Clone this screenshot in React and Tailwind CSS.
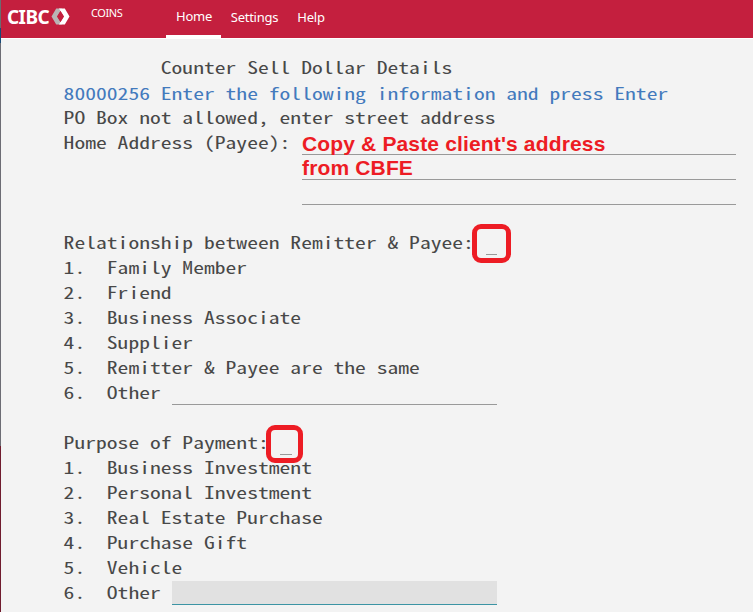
import React from "react";

const relationships = [
  "Family Member",
  "Friend",
  "Business Associate",
  "Supplier",
  "Remitter & Payee are the same",
];

const purposes = [
  "Business Investment",
  "Personal Investment",
  "Real Estate Purchase",
  "Purchase Gift",
  "Vehicle",
];

function Logo() {
  return (
    <div className="flex w-[77px] pl-[6px]">
      <span className="w-[44px] text-[19px] leading-[34px] font-bold tracking-[-0.6px] whitespace-nowrap">CIBC</span>
      <svg className="mt-2 h-[17px] w-[19px]" viewBox="0 0 19 17">
        <path d="M5.2 0.5H11L6.3 8.5L11 16.5H5.2L0.5 8.5Z" fill="#b9b4b5" />
        <path d="M8 0.5H13.8L18.5 8.5L13.8 16.5H8L12.7 8.5Z" fill="#fff" />
        <path d="M9.5 3L13 8.5L9.5 14L6 8.5Z" fill="#c41f3e" />
      </svg>
    </div>
  );
}

function Row({ children }) {
  return <div className="flex h-[25px]">{children}</div>;
}

function Label({ children }) {
  return (
    <span className="inline-block origin-center -translate-x-[0.4px] -translate-y-[0.7px] scale-y-[0.77] whitespace-pre">
      {children}
    </span>
  );
}

function Options({ items }) {
  return items.map((item, i) => (
    <Row key={item}>
      <Label>{`${i + 1}.  ${item}`}</Label>
    </Row>
  ));
}

export default function App() {
  return (
    <div className="flex h-[612px] w-[753px] overflow-hidden bg-[#f3f3f3]">
      <div className="flex w-px shrink-0 flex-col">
        <div className="h-[28px] bg-[#6b6b70]" />
        <div className="h-[15px] bg-[#174a78]" />
        <div className="h-[403px] bg-[#6c6c74]" />
        <div className="h-[166px] bg-[#701c2e]" />
      </div>
      <div className="flex-1">
        <header className="flex h-[39px] border-b border-white bg-[#c41f3e] font-['Noto_Sans',sans-serif] text-[13px] text-white">
          <Logo />
          <div className="ml-[13px] w-[75px] text-[11px] leading-[26px] tracking-[-0.4px]">COINS</div>
          <nav className="flex tracking-[-0.25px]">
            <a className="w-[55px] border-b-[3px] border-white pl-px text-center leading-[33px]">Home</a>
            <a className="w-[67px] text-center leading-[35px]">Settings</a>
            <a className="w-[46px] text-center leading-[35px]">Help</a>
          </nav>
        </header>
        <main className="pt-[16px] pl-[63px] font-['Noto_Sans_Mono_CJK_SC','DejaVu_Sans_Mono',monospace] text-[21.6px] leading-[25px] text-[#484848]">
          <Row>
            <Label>{"         Counter Sell Dollar Details"}</Label>
          </Row>
          <Row>
            <div className="pt-px text-[#437abd]">
              <Label>80000256 Enter the following information and press Enter</Label>
            </div>
          </Row>
          <Row>
            <Label>PO Box not allowed, enter street address</Label>
          </Row>
          <div className="flex h-[100px]">
            <div className="w-[238px]">
              <Label>Home Address (Payee):</Label>
            </div>
            <div className="relative w-[434px]">
              <div className="h-[25px] border-b border-[#999]" />
              <div className="h-[25px] border-b border-[#999]" />
              <div className="h-[25px] border-b border-[#999]" />
              <div className="absolute top-[2px] left-0 font-['Liberation_Sans',Arial,sans-serif] text-[21px] leading-[24px] font-bold tracking-[0.15px] whitespace-nowrap text-[#ed1c24]">
                Copy &amp; Paste client's address
                <br />
                from CBFE
              </div>
            </div>
          </div>
          <Row>
            <div className="w-[422px]">
              <Label>Relationship between Remitter &amp; Payee:</Label>
            </div>
            <div className="relative w-[11px] border-b border-[#999]">
              <span className="absolute -top-[6px] -left-[14px] h-[39px] w-[39px] rounded-[9px] border-[5px] border-[#ed1c24]" />
            </div>
          </Row>
          <Options items={relationships} />
          <Row>
            <div className="w-[108px]">
              <Label>6.  Other</Label>
            </div>
            <div className="w-[325px] border-b border-[#999]" />
          </Row>
          <Row />
          <Row>
            <div className="w-[216px]">
              <Label>Purpose of Payment:</Label>
            </div>
            <div className="relative z-10 w-[12px] border-b border-[#999]">
              <span className="absolute -top-[5px] -left-[14px] h-[38px] w-[37px] rounded-[9px] border-[5px] border-[#ed1c24]" />
            </div>
          </Row>
          <Options items={purposes} />
          <Row>
            <div className="w-[108px]">
              <Label>6.  Other</Label>
            </div>
            <div className="mt-px w-[325px] border-b border-[#3c94a4] bg-[#e1e1e1]" />
          </Row>
        </main>
      </div>
    </div>
  );
}
